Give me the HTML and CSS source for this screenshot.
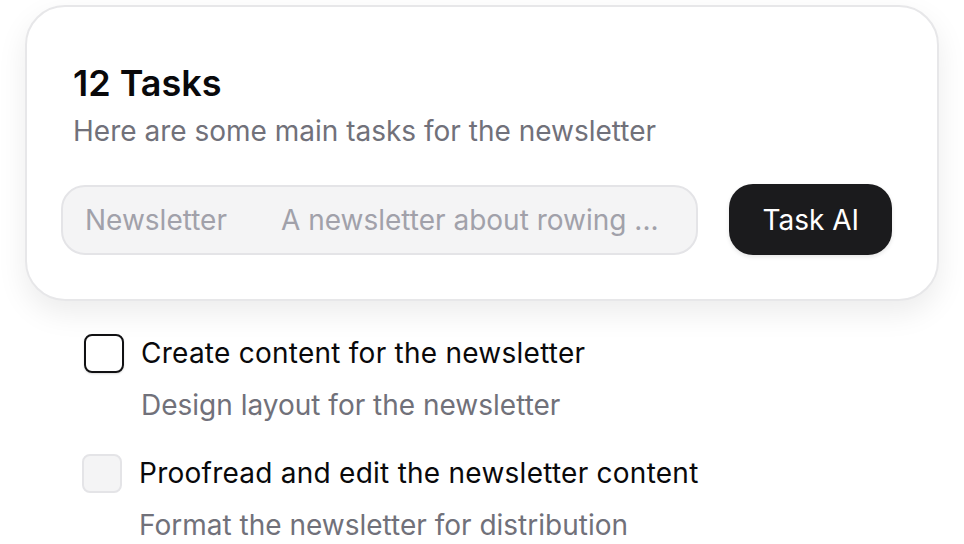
FILE: index.html
```html
<!DOCTYPE html>
<html lang="en">
<head>
    <meta charset="UTF-8">
    <meta name="viewport" content="width=device-width, initial-scale=1.0">
    <title>Tasks</title>
    <link rel="stylesheet" href="styles.css">
</head>
<body>

<!-- Task card -->
<div class="task-card">
    <div class="task-head">
        <h1>12 Tasks</h1>
        <p>Here are some main tasks for the newsletter</p>
    </div>
    <div class="task-form">
        <div class="prompt">
            <span class="prompt-topic">Newsletter</span>
            <span class="prompt-text">A newsletter about rowing ...</span>
        </div>
        <button class="task-btn">Task AI</button>
    </div>
</div>

<!-- Task list -->
<ul class="task-list">
    <li class="task">
        <div class="task-row">
            <span class="check"></span>
            <span class="task-title">Create content for the newsletter</span>
        </div>
        <div class="task-sub">Design layout for the newsletter</div>
    </li>
    <li class="task task-shifted">
        <div class="task-row">
            <span class="check check-muted"></span>
            <span class="task-title">Proofread and edit the newsletter content</span>
        </div>
        <div class="task-sub">Format the newsletter for distribution</div>
    </li>
</ul>

</body>
</html>
```

FILE: styles.css
```css
/* Basic styling */
body {
    font-family: Inter, "Noto Sans", sans-serif;
    background-color: #ffffff;
    color: #09090b;
    margin: 0;
    padding: 5px 25px 0;
}

/* Card */
.task-card {
    background-color: #ffffff;
    border: 2px solid #e7e7e9;
    border-radius: 40px;
    box-shadow: 0 12px 30px rgba(0, 0, 0, 0.08);
    padding: 56px 45px 44px 34px;
}

.task-head {
    padding-left: 12px;
}

.task-head h1 {
    margin: 0;
    font-size: 36px;
    line-height: 40px;
    font-weight: 600;
}

.task-head p {
    margin: 10px 0 0;
    font-size: 28px;
    line-height: 36px;
    color: #71717a;
}

.task-form {
    display: flex;
    align-items: center;
    gap: 31px;
    margin-top: 35px;
}

.prompt {
    flex: 1;
    display: flex;
    align-items: center;
    height: 66px;
    padding: 0 22px;
    background-color: #f4f4f5;
    border: 2px solid #e4e4e7;
    border-radius: 24px;
    font-size: 28px;
    color: #a1a1aa;
}

.prompt-topic {
    width: 196px;
}

.task-btn {
    height: 71px;
    padding: 0 33px;
    border: none;
    border-radius: 24px;
    background-color: #1b1b1d;
    color: #ffffff;
    font-family: inherit;
    font-size: 28px;
    box-shadow: 0 2px 4px rgba(0, 0, 0, 0.1);
}

/* Task list */
.task-list {
    list-style: none;
    margin: 32px 0 0;
    padding: 0 0 0 59px;
}

.task {
    margin-bottom: 30px;
}

.task:last-child {
    margin-bottom: 0;
}

.task-shifted {
    margin-left: -2px;
}

.task-row {
    display: flex;
    align-items: center;
    gap: 17px;
}

.check {
    box-sizing: border-box;
    width: 40px;
    height: 39px;
    border: 2px solid #111113;
    border-radius: 8px;
    box-shadow: 0 1px 2px rgba(0, 0, 0, 0.15);
}

.check-muted {
    border-color: #e4e4e7;
    background-color: #f4f4f5;
    box-shadow: none;
}

.task-title {
    font-size: 28px;
    line-height: 40px;
    letter-spacing: 0.25px;
}

.task-sub {
    margin: 14px 0 0 57px;
    font-size: 28px;
    line-height: 36px;
    color: #71717a;
}
```
